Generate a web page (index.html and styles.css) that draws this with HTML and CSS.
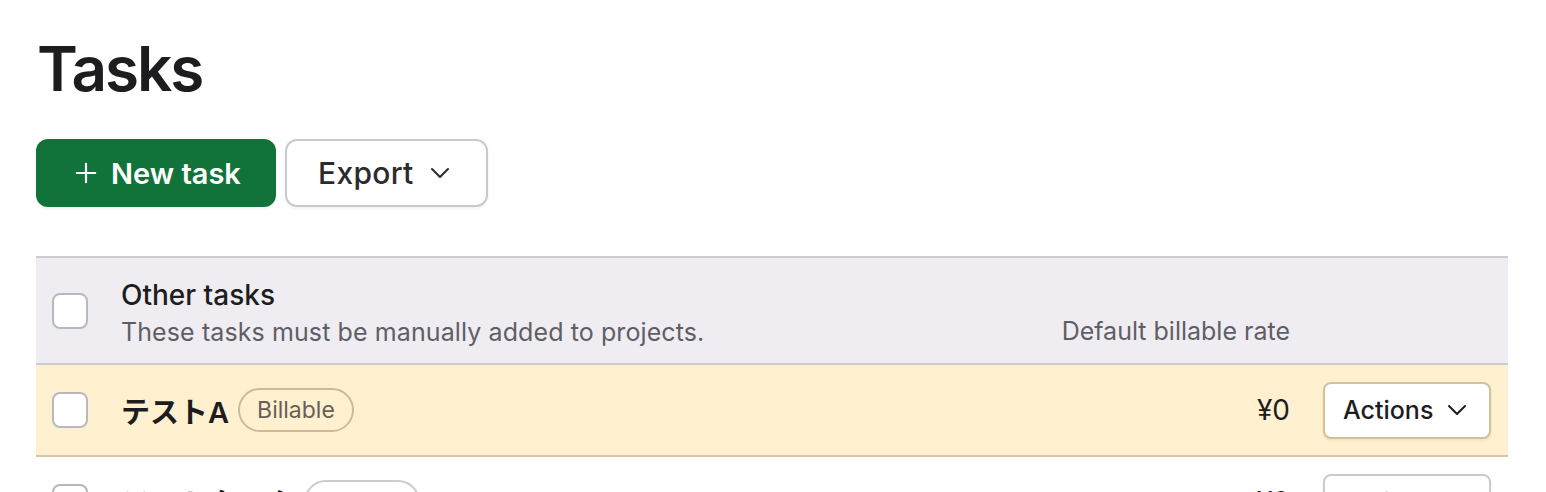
FILE: index.html
```html
<!DOCTYPE html>
<html lang="en">
<head>
<meta charset="utf-8">
<title>Tasks</title>
<link rel="stylesheet" href="styles.css">
</head>
<body>
<main class="page">
  <h1 class="title">Tasks</h1>
  <div class="toolbar">
    <button class="btn btn-primary" type="button">
      <svg class="icon-plus" viewBox="0 0 24 24" width="22" height="22" aria-hidden="true"><path d="M12 2v20M2 12h20" fill="none" stroke="currentColor" stroke-width="2.4" stroke-linecap="round"/></svg>
      <span>New task</span>
    </button>
    <button class="btn btn-secondary" type="button">
      <span>Export</span>
      <svg class="chev" viewBox="0 0 20 12" width="20" height="12" aria-hidden="true"><path d="M2 2l8 8 8-8" fill="none" stroke="currentColor" stroke-width="2" stroke-linecap="round" stroke-linejoin="round"/></svg>
    </button>
  </div>

  <section class="table">
    <div class="row row-head">
      <span class="check"></span>
      <div class="name-cell">
        <div class="group-title">Other tasks</div>
        <div class="group-desc">These tasks must be manually added to projects.</div>
      </div>
      <div class="rate-head">Default billable rate</div>
      <div class="act-cell"></div>
    </div>
    <div class="row row-task row-highlight">
      <span class="check"></span>
      <div class="name-cell name-inline">
        <span class="task-name">テストA</span>
        <span class="pill">Billable</span>
      </div>
      <div class="rate">¥0</div>
      <div class="act-cell">
        <button class="btn-actions" type="button">
          <span>Actions</span>
          <svg class="chev" viewBox="0 0 20 12" width="20" height="12" aria-hidden="true"><path d="M2 2l8 8 8-8" fill="none" stroke="currentColor" stroke-width="2" stroke-linecap="round" stroke-linejoin="round"/></svg>
        </button>
      </div>
    </div>
    <div class="row row-task">
      <span class="check"></span>
      <div class="name-cell name-inline">
        <span class="task-name">テストタスク</span>
        <span class="pill pill-plain">Billable</span>
      </div>
      <div class="rate">¥0</div>
      <div class="act-cell">
        <button class="btn-actions btn-actions-plain" type="button">
          <span>Actions</span>
          <svg class="chev" viewBox="0 0 20 12" width="20" height="12" aria-hidden="true"><path d="M2 2l8 8 8-8" fill="none" stroke="currentColor" stroke-width="2" stroke-linecap="round" stroke-linejoin="round"/></svg>
        </button>
      </div>
    </div>
  </section>
</main>
</body>
</html>
```

FILE: styles.css
```css
* { box-sizing: border-box; }

html, body {
  margin: 0;
  padding: 0;
  background: #ffffff;
}

body {
  font-family: Inter, "Noto Sans CJK JP", "Liberation Sans", sans-serif;
  color: #1d1d1f;
  overflow: hidden;
}

.page {
  padding: 37px 38px 0 36px;
}

.title {
  margin: 0 0 0 1px;
  font-size: 62px;
  line-height: 64px;
  font-weight: 600;
  letter-spacing: -2px;
  color: #1d1d1f;
}

.toolbar {
  display: flex;
  gap: 9px;
  margin-top: 38px;
}

.btn {
  display: inline-flex;
  align-items: center;
  height: 68px;
  border-radius: 12px;
  font-family: inherit;
  cursor: pointer;
}

.btn-primary {
  width: 240px;
  padding: 0 0 0 39px;
  gap: 14px;
  background: #11733a;
  border: none;
  color: #ffffff;
  font-size: 29px;
  font-weight: 600;
  box-shadow: 0 2px 3px rgba(0,0,0,0.06);
}

.btn-secondary {
  width: 203px;
  padding: 0 0 0 31px;
  gap: 16px;
  background: #ffffff;
  border: 2px solid #cacaca;
  color: #2b2b2e;
  font-size: 30px;
  font-weight: 500;
  letter-spacing: 0.3px;
  box-shadow: 0 2px 3px rgba(0,0,0,0.05);
}

.chev { flex: none; }

.table {
  margin-top: 49px;
  border-top: 2px solid #cdcbd0;
}

.row {
  display: grid;
  grid-template-columns: 36px 1fr auto 168px;
  column-gap: 33px;
  align-items: center;
  padding: 0 17px 0 16px;
}

.row-head {
  height: 107px;
  background: #efedf1;
  border-bottom: 2px solid #cdcbd0;
}

.row-task {
  height: 92px;
  border-bottom: 2px solid #d7c6a5;
}

.row-highlight {
  background: #fff0cf;
}

.check {
  width: 36px;
  height: 36px;
  border: 2px solid #b9b8c0;
  border-radius: 8px;
  background: #ffffff;
}

.group-title {
  font-size: 28px;
  font-weight: 500;
  color: #1d1d1f;
  line-height: 34px;
  margin-top: 7px;
}

.group-desc {
  margin-top: 3px;
  font-size: 25px;
  color: #5f5e66;
  line-height: 35px;
  letter-spacing: 0.1px;
}

.rate-head {
  align-self: end;
  margin-bottom: 17px;
  font-size: 25px;
  color: #5f5e66;
}

.name-inline {
  display: flex;
  align-items: center;
  gap: 9px;
}

.task-name {
  font-size: 29px;
  font-weight: 600;
  color: #1d1d1f;
}

.pill {
  display: inline-flex;
  align-items: center;
  height: 44px;
  padding: 0 17px;
  border: 2px solid #cdbb97;
  border-radius: 22px;
  font-size: 23px;
  color: #6a5f58;
}

.pill-plain {
  border-color: #cbcbcb;
}

.rate {
  font-size: 28px;
  color: #1d1d1f;
  text-align: right;
}

.btn-actions {
  display: inline-flex;
  align-items: center;
  gap: 14px;
  width: 168px;
  height: 57px;
  padding: 0 0 0 18px;
  background: #ffffff;
  border: 2px solid #d3c19d;
  border-radius: 8px;
  font-family: inherit;
  font-size: 25px;
  font-weight: 500;
  color: #1d1d1f;
  box-shadow: 0 2px 3px rgba(0,0,0,0.06);
}

.btn-actions-plain {
  border-color: #cbcbcb;
}
```
